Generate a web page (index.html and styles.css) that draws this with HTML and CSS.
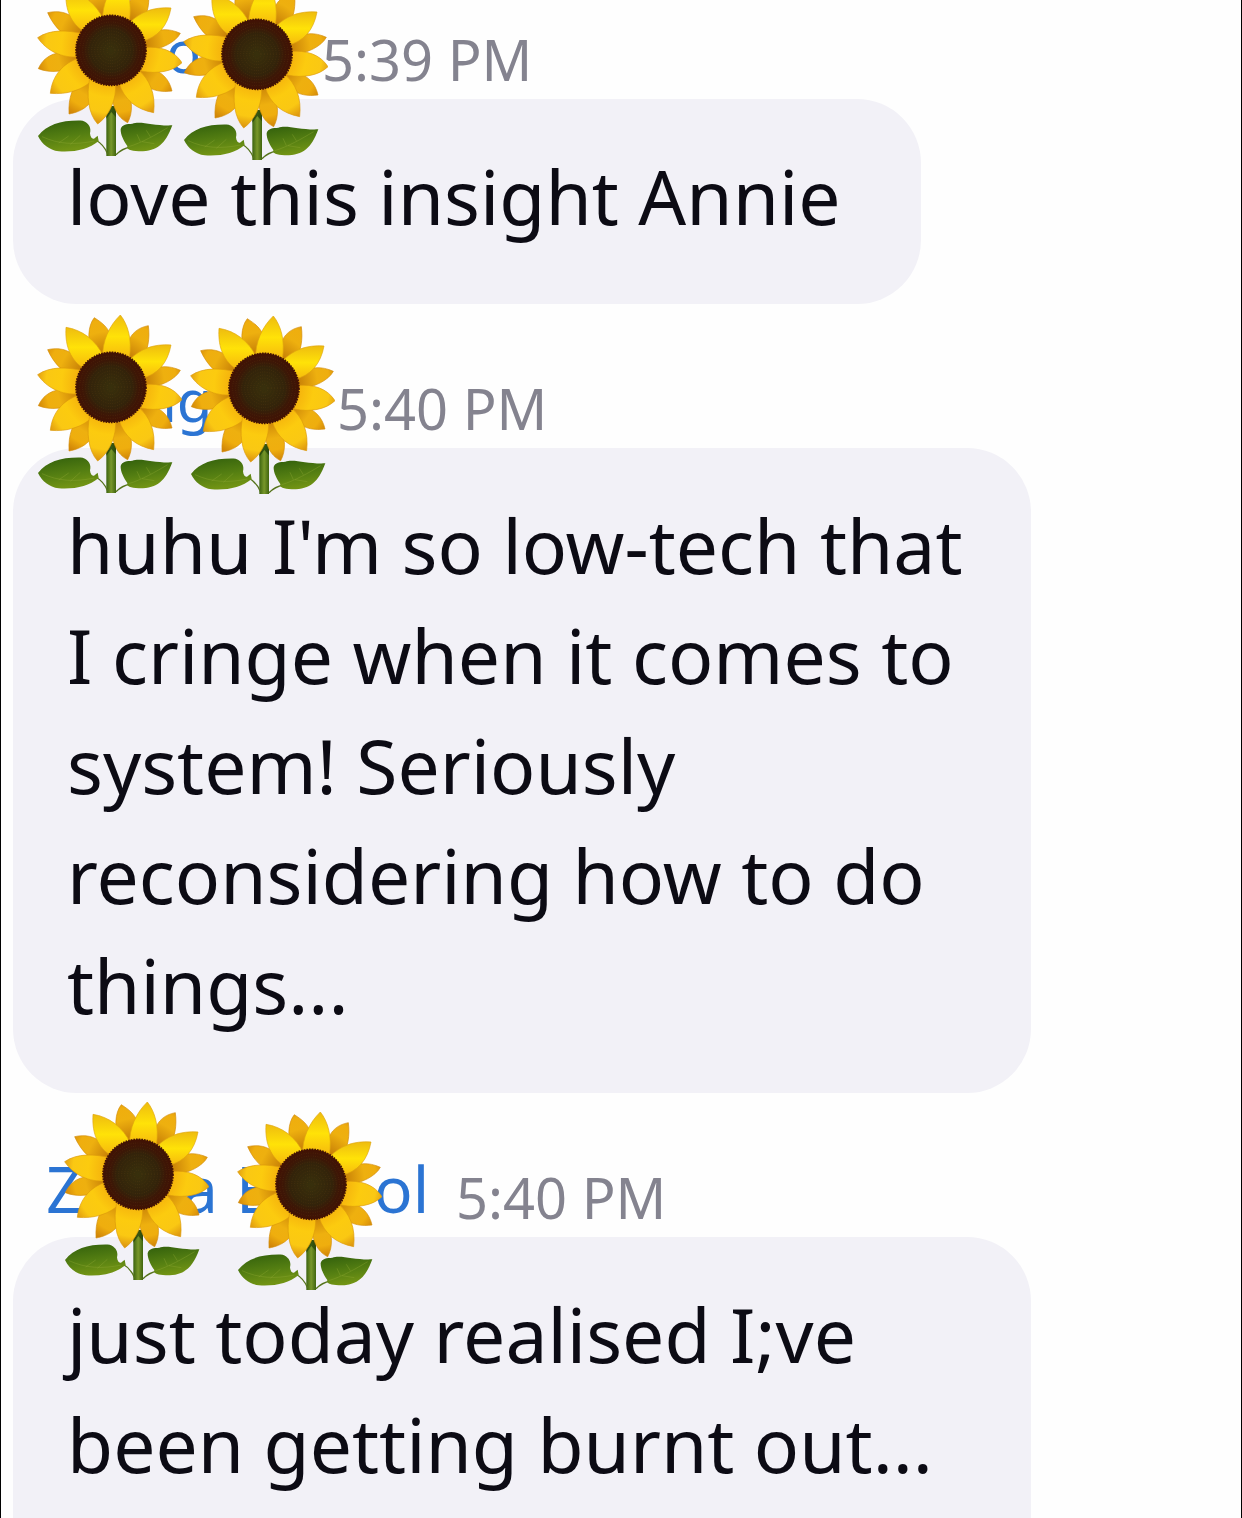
FILE: index.html
```html
<!DOCTYPE html>
<html lang="en">
<head>
  <meta charset="UTF-8" />
  <meta name="viewport" content="width=device-width, initial-scale=1.0" />
  <title>Chat</title>
  <link rel="stylesheet" href="styles.css">
</head>
<body>
  <svg class="sprite" aria-hidden="true">
    <defs>
      <radialGradient id="petal" gradientUnits="userSpaceOnUse" cx="272" cy="255" r="230">
        <stop offset="0.4" stop-color="#f3ad0c" />
        <stop offset="0.65" stop-color="#fccb0f" />
        <stop offset="0.85" stop-color="#fac813" />
        <stop offset="1" stop-color="#dc9410" />
      </radialGradient>
      <radialGradient id="petal-back" gradientUnits="userSpaceOnUse" cx="272" cy="255" r="230">
        <stop offset="0.45" stop-color="#c98207" />
        <stop offset="0.7" stop-color="#eeb00f" />
        <stop offset="0.85" stop-color="#efae0e" />
        <stop offset="1" stop-color="#cf8308" />
      </radialGradient>
      <linearGradient id="petal-top" x1="0" y1="0" x2="0" y2="1">
        <stop offset="0" stop-color="#eebc0f" />
        <stop offset="0.5" stop-color="#ffe208" />
        <stop offset="1" stop-color="#f6b90d" />
      </linearGradient>
      <radialGradient id="disc">
        <stop offset="0" stop-color="#38300c" />
        <stop offset="0.6" stop-color="#33230a" />
        <stop offset="0.8" stop-color="#3d1606" />
        <stop offset="1" stop-color="#421204" />
      </radialGradient>
      <linearGradient id="stem">
        <stop offset="0" stop-color="#3c6310" />
        <stop offset="0.5" stop-color="#78972a" />
        <stop offset="1" stop-color="#41650f" />
      </linearGradient>
      <linearGradient id="leaf" x1="0" y1="0" x2="0.3" y2="1">
        <stop offset="0" stop-color="#315f0c" />
        <stop offset="0.6" stop-color="#557f12" />
        <stop offset="1" stop-color="#719314" />
      </linearGradient>
    </defs>
    <symbol id="sunflower" viewBox="50 43 435 540">
      <rect x="258" y="430" width="29" height="150" fill="url(#stem)" />
      <path d="M258 430h29v34l-14-16-15 20z" fill="#1f3d08" opacity=".7" />
      <path d="M226 532Q250 545 262 574M330 553Q305 558 287 576" fill="none" stroke="#55731a" stroke-width="4" />
      <g fill="url(#leaf)">
        <path d="M53 520C82 484 125 472 187 474C207 482 213 496 209 512C210 523 215 530 221 528L232 519L235 535C205 560 165 569 115 566C87 562 65 545 53 520Z" />
        <path d="M456 488C435 545 410 567 355 566C330 564 318 561 321 550C310 535 300 515 301 499C305 485 320 484 336 483C360 473 405 491 456 488Z" />
      </g>
      <path d="M65 522C115 545 165 547 222 535M115 541L145 520M150 545L180 518M325 552C365 540 405 517 442 495M360 537L350 515M390 522L378 503M365 537L402 543" fill="none" stroke="#91aa35" stroke-width="2" opacity=".55" />
      <g fill="url(#petal-back)" stroke="#d38c0a" stroke-width="2" stroke-linejoin="round">
        <path d="M222 54C244 69 262 80 272 110L272 180L220 180C198 125 203 77 222 54Z" />
        <path d="M384 78C352 84 332 102 322 130L320 190L360 190C384 155 389 115 384 78Z" />
        <path d="M82 150C112 143 145 148 165 172L200 210L150 225C120 212 97 184 82 150Z" />
        <path d="M480 212C445 196 410 197 385 218L360 240L375 266C425 260 466 238 480 212Z" />
        <path d="M54 318C68 286 98 266 140 270L190 280L175 310C135 326 90 333 54 318Z" />
        <path d="M146 454C144 405 155 370 190 340L230 370C220 428 184 447 146 454Z" />
        <path d="M322 480C290 464 272 430 272 362L320 370C337 415 338 450 322 480Z" />
        <path d="M455 385C425 389 395 385 372 365L345 320L385 318C425 323 448 353 455 385Z" />
      </g>
      <g fill="url(#petal)" stroke="#dd9a0a" stroke-width="2" stroke-linejoin="round">
        <path d="M52 225C90 199 143 202 185 213L175 282C125 288 77 263 52 225Z" />
        <path d="M485 300C462 264 420 249 370 255L362 325C410 335 457 327 485 300Z" />
        <path d="M90 392C95 342 126 300 180 285L220 350C184 384 140 396 90 392Z" />
        <path d="M400 450C348 440 311 412 296 360L352 320C390 351 406 395 400 450Z" />
        <path d="M232 484C203 452 198 398 208 348L285 360C291 410 265 461 232 484Z" />
      </g>
      <g fill="url(#petal-top)" stroke="#e0a40c" stroke-width="2" stroke-linejoin="round">
        <path d="M137 83C182 90 227 119 250 172L185 203C145 174 134 131 137 83Z" />
        <path d="M452 136C400 132 360 148 330 178L362 236C412 226 442 190 452 136Z" />
        <path d="M300 46C323 75 336 120 327 175L247 175C245 124 267 78 300 46Z" />
      </g>
      <circle cx="272" cy="263" r="105" fill="url(#disc)" />
      <circle cx="272" cy="263" r="105" fill="none" stroke="#421204" stroke-width="5" stroke-dasharray="5 3" />
      <g fill="none" stroke="#6b4a18" stroke-width="2" stroke-dasharray="2 5" opacity=".6">
        <circle cx="272" cy="263" r="94" />
        <circle cx="272" cy="263" r="85" />
        <circle cx="272" cy="263" r="76" />
        <circle cx="272" cy="263" r="67" />
        <circle cx="272" cy="263" r="58" />
        <circle cx="272" cy="263" r="49" />
        <circle cx="272" cy="263" r="40" />
        <circle cx="272" cy="263" r="31" />
        <circle cx="272" cy="263" r="22" />
        <circle cx="272" cy="263" r="12" />
      </g>
    </symbol>
  </svg>

  <main class="chat">
    <article class="message message-first">
      <header class="meta">
        <span class="name name-first">o</span>
        <time class="time">5:39 PM</time>
        <svg class="flower flower-1a" aria-hidden="true"><use href="#sunflower" /></svg>
        <svg class="flower flower-1b" aria-hidden="true"><use href="#sunflower" /></svg>
      </header>
      <p class="bubble">love this insight Annie</p>
    </article>

    <article class="message">
      <header class="meta">
        <span class="name name-second">ng</span>
        <time class="time">5:40 PM</time>
        <svg class="flower flower-2a" aria-hidden="true"><use href="#sunflower" /></svg>
        <svg class="flower flower-2b" aria-hidden="true"><use href="#sunflower" /></svg>
      </header>
      <p class="bubble">huhu I'm so low-tech that I cringe when it comes to system! Seriously reconsidering how to do things...</p>
    </article>

    <article class="message message-last">
      <header class="meta">
        <span class="name name-third"><span>Z</span><span>a</span><span>E</span><span>ol</span></span>
        <time class="time">5:40 PM</time>
        <svg class="flower flower-3a" aria-hidden="true"><use href="#sunflower" /></svg>
        <svg class="flower flower-3b" aria-hidden="true"><use href="#sunflower" /></svg>
      </header>
      <p class="bubble">just today realised I;ve been getting burnt out...</p>
    </article>
  </main>
</body>
</html>
```
FILE: styles.css
```css
:root {
  --bubble: #f2f1f7;
  --text: #0c0b14;
  --muted: #84838f;
  --name: #2b74d3;
}

* {
  box-sizing: border-box;
}

body {
  margin: 0;
  background: #fefefe;
  color: var(--text);
  font-family: "Noto Sans", "Open Sans", sans-serif;
}

.sprite {
  position: absolute;
  width: 0;
  height: 0;
}

.chat {
  height: 100vh;
  overflow: hidden;
  padding: 0 1px 0 12px;
  border-left: 1px solid #000;
  border-right: 1px solid #000;
}

.meta {
  position: relative;
  display: flex;
  align-items: flex-end;
  height: 144px;
}

.message-first .meta {
  height: 99px;
}

.name {
  color: var(--name);
  font-size: 64px;
  line-height: 80px;
  padding-bottom: 8px;
}

.name-first {
  width: 309px;
  padding-left: 153px;
  font-size: 58px;
}

.name-second {
  width: 324px;
  padding-left: 128px;
  font-size: 58px;
}

.name-third {
  display: grid;
  grid-template-columns: 136px 54px 138px 1fr;
  width: 443px;
  padding-left: 33px;
}

.time {
  color: var(--muted);
  font-size: 56px;
  line-height: 80px;
}

.flower {
  position: absolute;
  z-index: 1;
  width: 145px;
  height: 180px;
}

.flower-1a {
  left: 24px;
  bottom: -58px;
}

.flower-1b {
  left: 170px;
  bottom: -62px;
}

.flower-2a {
  left: 24px;
  bottom: -46px;
}

.flower-2b {
  left: 177px;
  bottom: -47px;
}

.flower-3a {
  left: 51px;
  bottom: -44px;
}

.flower-3b {
  left: 224px;
  bottom: -54px;
}

.bubble {
  width: fit-content;
  max-width: 83%;
  margin: 0;
  padding: 42px 64px 53px 54px;
  border-radius: 64px;
  background: var(--bubble);
  font-size: 75px;
  line-height: 110px;
}

.message-first .bubble {
  min-width: 74%;
}

/* the last message runs on below the window */
.message-last .bubble {
  min-height: 425px;
}
```
